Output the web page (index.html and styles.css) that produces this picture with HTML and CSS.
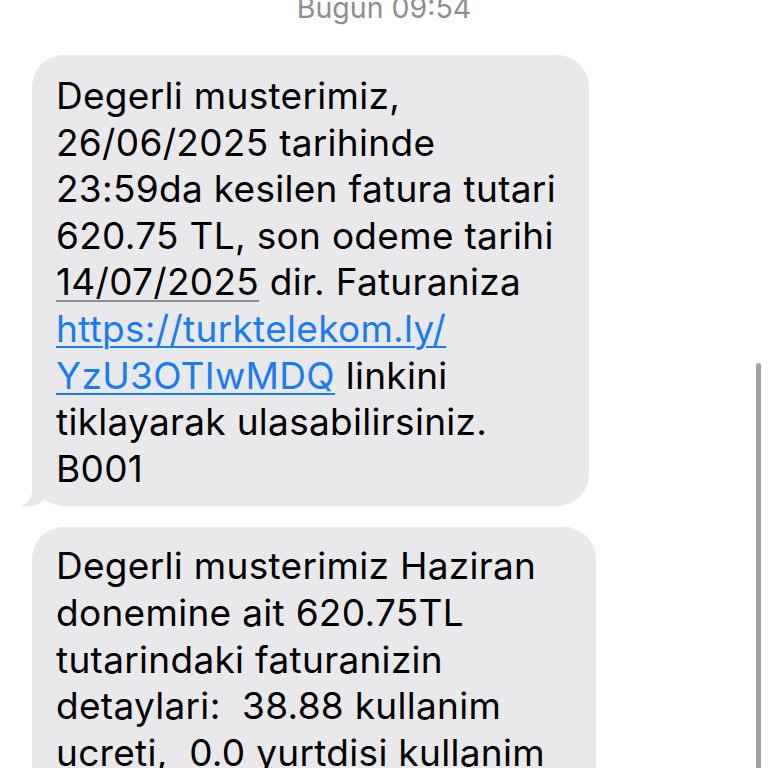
FILE: index.html
```html
<!DOCTYPE html>
<html>
<head>
<meta charset="utf-8">
<link rel="stylesheet" href="styles.css">
</head>
<body>
<div class="screen">
  <div class="stamp">Bugun 09:54</div>
  <div class="thread">
    <div class="bubble b1 tail">
      Degerli musterimiz,<br>
      26/06/2025 tarihinde<br>
      23:59da kesilen fatura tutari<br>
      620.75 TL, son odeme tarihi<br>
      <span class="date">14/07/2025</span> dir. Faturaniza<br>
      <span class="link">https://turktelekom.ly/<br>YzU3OTIwMDQ</span> linkini<br>
      tiklayarak ulasabilirsiniz.<br>
      B001
    </div>
    <div class="bubble b2">
      Degerli musterimiz Haziran<br>
      donemine ait 620.75TL<br>
      tutarindaki faturanizin<br>
      detaylari:&nbsp; 38.88 kullanim<br>
      ucreti,&nbsp; 0.0 yurtdisi kullanim<br>
      ucreti
    </div>
  </div>
  <div class="scrollbar"></div>
</div>
</body>
</html>
```
FILE: styles.css
```css
html, body {
  margin: 0;
  padding: 0;
  background: #ffffff;
}
.screen {
  position: relative;
  width: 768px;
  height: 768px;
  overflow: hidden;
  font-family: Inter, "Liberation Sans", sans-serif;
  color: #000;
}
.stamp {
  margin-top: -9px;
  height: 33px;
  text-align: center;
  font-size: 28.5px;
  line-height: 33px;
  color: #8e8e93;
}
.thread {
  display: flex;
  flex-direction: column;
  gap: 21px;
  padding: 31px 0 0 32px;
}
.bubble {
  position: relative;
  box-sizing: border-box;
  background: #e9e9eb;
  border-radius: 32px;
  font-size: 37px;
  letter-spacing: 0.3px;
  line-height: 46.6px;
  padding: 18px 20px 14px 24px;
  white-space: nowrap;
}
.b1 { width: 557px; }
.b2 { width: 564px; padding-top: 16px; }
.tail::before {
  content: "";
  position: absolute;
  bottom: 0;
  left: -10px;
  width: 30px;
  height: 37px;
  background: #e9e9eb;
  border-bottom-right-radius: 24px 21px;
}
.tail::after {
  content: "";
  position: absolute;
  bottom: 0;
  left: -39px;
  width: 39px;
  height: 37px;
  background: #ffffff;
  border-bottom-right-radius: 15px;
}
.date {
  text-decoration: underline;
  text-decoration-color: #8e8e93;
  text-decoration-thickness: 2px;
  text-underline-offset: 5px;
}
.link {
  color: #1a7cf2;
  text-decoration: underline;
  text-decoration-thickness: 2px;
  text-underline-offset: 4px;
}
.scrollbar {
  position: absolute;
  left: 756px;
  top: 363px;
  width: 5px;
  height: 420px;
  border-radius: 3px;
  background: #a3a3a3;
}
```
